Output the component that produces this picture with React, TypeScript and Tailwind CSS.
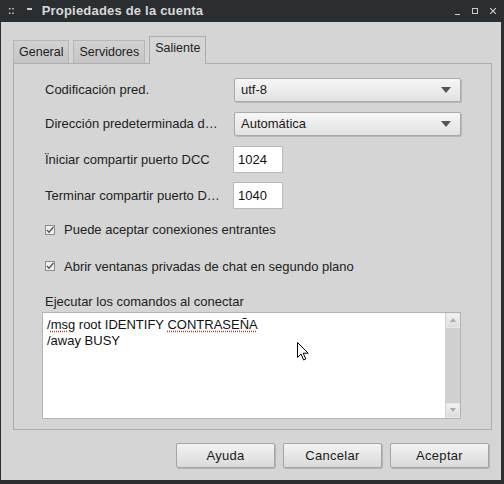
import React from 'react'

const font = { fontFamily: '"Liberation Sans", Arial, sans-serif' }

function Combo({ value }: { value: string }) {
  return (
    <div className="flex h-[24px] w-[227px] items-center justify-between rounded-[2px] border border-[#a9a9a9] bg-gradient-to-b from-[#f6f6f6] to-[#e2e2e2] pl-[6px] pr-[9px] text-[13px] text-[#1a1a1a] shadow-[1px_1px_0_#b8b8b8]">
      <span>{value}</span>
      <svg width="10" height="7" viewBox="0 0 10 7"><path d="M0 0h10L5 6z" fill="#555" /></svg>
    </div>
  )
}

function Field({ value }: { value: string }) {
  return (
    <div className="flex h-[27px] w-[50px] items-center border border-[#b9b9b9] bg-white pl-[4px] text-[13px] text-[#111]">{value}</div>
  )
}

function Check({ label }: { label: string }) {
  return (
    <div className="flex items-center gap-[9px]">
      <div className="flex h-[10px] w-[10px] items-center justify-center border border-[#8d8d8d] bg-[#ededed]">
        <svg width="8" height="8" viewBox="0 0 8 8"><path d="M1 4l2 2.2L7.5 1" stroke="#555" strokeWidth="1.3" fill="none" /></svg>
      </div>
      <span>{label}</span>
    </div>
  )
}

function Button({ label }: { label: string }) {
  return (
    <button className="h-[25px] w-[99px] rounded-[2px] border border-[#a5a5a5] bg-gradient-to-b from-[#f3f3f3] to-[#dadada] text-[13px] tracking-[0.3px] text-[#1a1a1a] shadow-[1px_1px_0_#b5b5b5]">{label}</button>
  )
}

export default function App() {
  return (
    <div className="flex h-[484px] w-[504px] flex-col bg-[#2b2e31] text-[#222]" style={font}>
      {/* barra de título */}
      <div className="flex h-[22px] shrink-0 items-center text-[#c9cccf]">
        <span className="ml-[8px] text-[10px] font-bold leading-none">::</span>
        <span className="ml-[12px] mb-[5px] h-[2px] w-[5px] bg-[#c9cccf]" />
        <span className="ml-[10px] text-[13px] font-bold tracking-[0.2px] text-[#d7d9db]">Propiedades de la cuenta</span>
        <div className="ml-auto mr-[8px] flex items-center gap-[12px]">
          <span className="mt-[6px] h-[1px] w-[5px] bg-[#c9cccf]" />
          <span className="h-[6px] w-[6px] border border-[#c9cccf]" />
          <svg width="6" height="6" viewBox="0 0 6 6"><path d="M0 0l6 6M6 0L0 6" stroke="#c9cccf" strokeWidth="1.2" /></svg>
        </div>
      </div>

      <div className="mb-[4px] ml-[1px] mr-[3px] flex flex-1 flex-col bg-[#d5d5d5] px-[12px] pt-[14px]">
        {/* pestañas */}
        <div className="flex items-end gap-[4px] text-[12.5px]">
          <div className="flex h-[23px] items-center border border-b-0 border-[#b6b6b6] bg-gradient-to-b from-[#d2d2d2] to-[#c5c5c5] px-[5px]">General</div>
          <div className="flex h-[23px] items-center border border-b-0 border-[#b6b6b6] bg-gradient-to-b from-[#d2d2d2] to-[#c5c5c5] px-[5px]">Servidores</div>
          <div className="relative -mb-[1px] flex h-[28px] items-center border border-b-0 border-[#acacac] bg-[#d5d5d5] px-[5px] pb-[4px]">Saliente</div>
        </div>

        {/* panel */}
        <div className="flex h-[367px] w-[479px] flex-col border border-[#adadad] pl-[31px] pr-[30px] pt-[14px] text-[13px]">
          <div className="flex items-center justify-between">
            <span>Codificación pred.</span>
            <Combo value="utf-8" />
          </div>
          <div className="mt-[10px] flex items-center justify-between">
            <span>Dirección predeterminada d…</span>
            <Combo value="Automática" />
          </div>
          <div className="mt-[10px] flex items-center">
            <span className="w-[188px]">Ïniciar compartir puerto DCC</span>
            <Field value="1024" />
          </div>
          <div className="mt-[9px] flex items-center">
            <span className="w-[188px]">Terminar compartir puerto D…</span>
            <Field value="1040" />
          </div>
          <div className="mt-[11px]"><Check label="Puede aceptar conexiones entrantes" /></div>
          <div className="mt-[17px]"><Check label="Abrir ventanas privadas de chat en segundo plano" /></div>

          <div className="mt-[16px]">Ejecutar los comandos al conectar</div>
          <div className="relative -ml-[3px] flex h-[107px] w-[419px] border border-[#b3b3b3] bg-white">
            <div className="flex-1 pl-[4px] pt-[4px] text-[13px] leading-[16px] text-[#111]">
              <div>
                /<span className="underline decoration-[#c0392b] decoration-dotted underline-offset-2">msg</span> root IDENTIFY{' '}
                <span className="underline decoration-[#c0392b] decoration-dotted underline-offset-2">CONTRASEÑA</span>
              </div>
              <div>/away BUSY</div>
            </div>
            <div className="flex w-[15px] flex-col border-l border-[#d0d0d0] bg-[#d0d0d0]">
              <div className="flex h-[15px] items-center justify-center border border-[#e8e8e8] bg-gradient-to-b from-[#f2f2f2] to-[#dcdcdc]">
                <svg width="6" height="4" viewBox="0 0 6 4"><path d="M0 4h6L3 0z" fill="#aaa" /></svg>
              </div>
              <div className="flex-1" />
              <div className="flex h-[15px] items-center justify-center border border-[#e8e8e8] bg-gradient-to-b from-[#f2f2f2] to-[#dcdcdc]">
                <svg width="6" height="4" viewBox="0 0 6 4"><path d="M0 0h6L3 4z" fill="#aaa" /></svg>
              </div>
            </div>
            {/* puntero del ratón */}
            <svg className="absolute left-[254px] top-[29px]" width="12" height="19" viewBox="0 0 12 19">
              <path d="M0.5 0.5v15l3.5-3.5 2.6 6 2.2-1-2.6-5.8h5z" fill="white" stroke="black" strokeWidth="1" />
            </svg>
          </div>
        </div>

        {/* botones */}
        <div className="mt-[13px] flex justify-end gap-[8px]">
          <Button label="Ayuda" />
          <Button label="Cancelar" />
          <Button label="Aceptar" />
        </div>
      </div>
    </div>
  )
}
